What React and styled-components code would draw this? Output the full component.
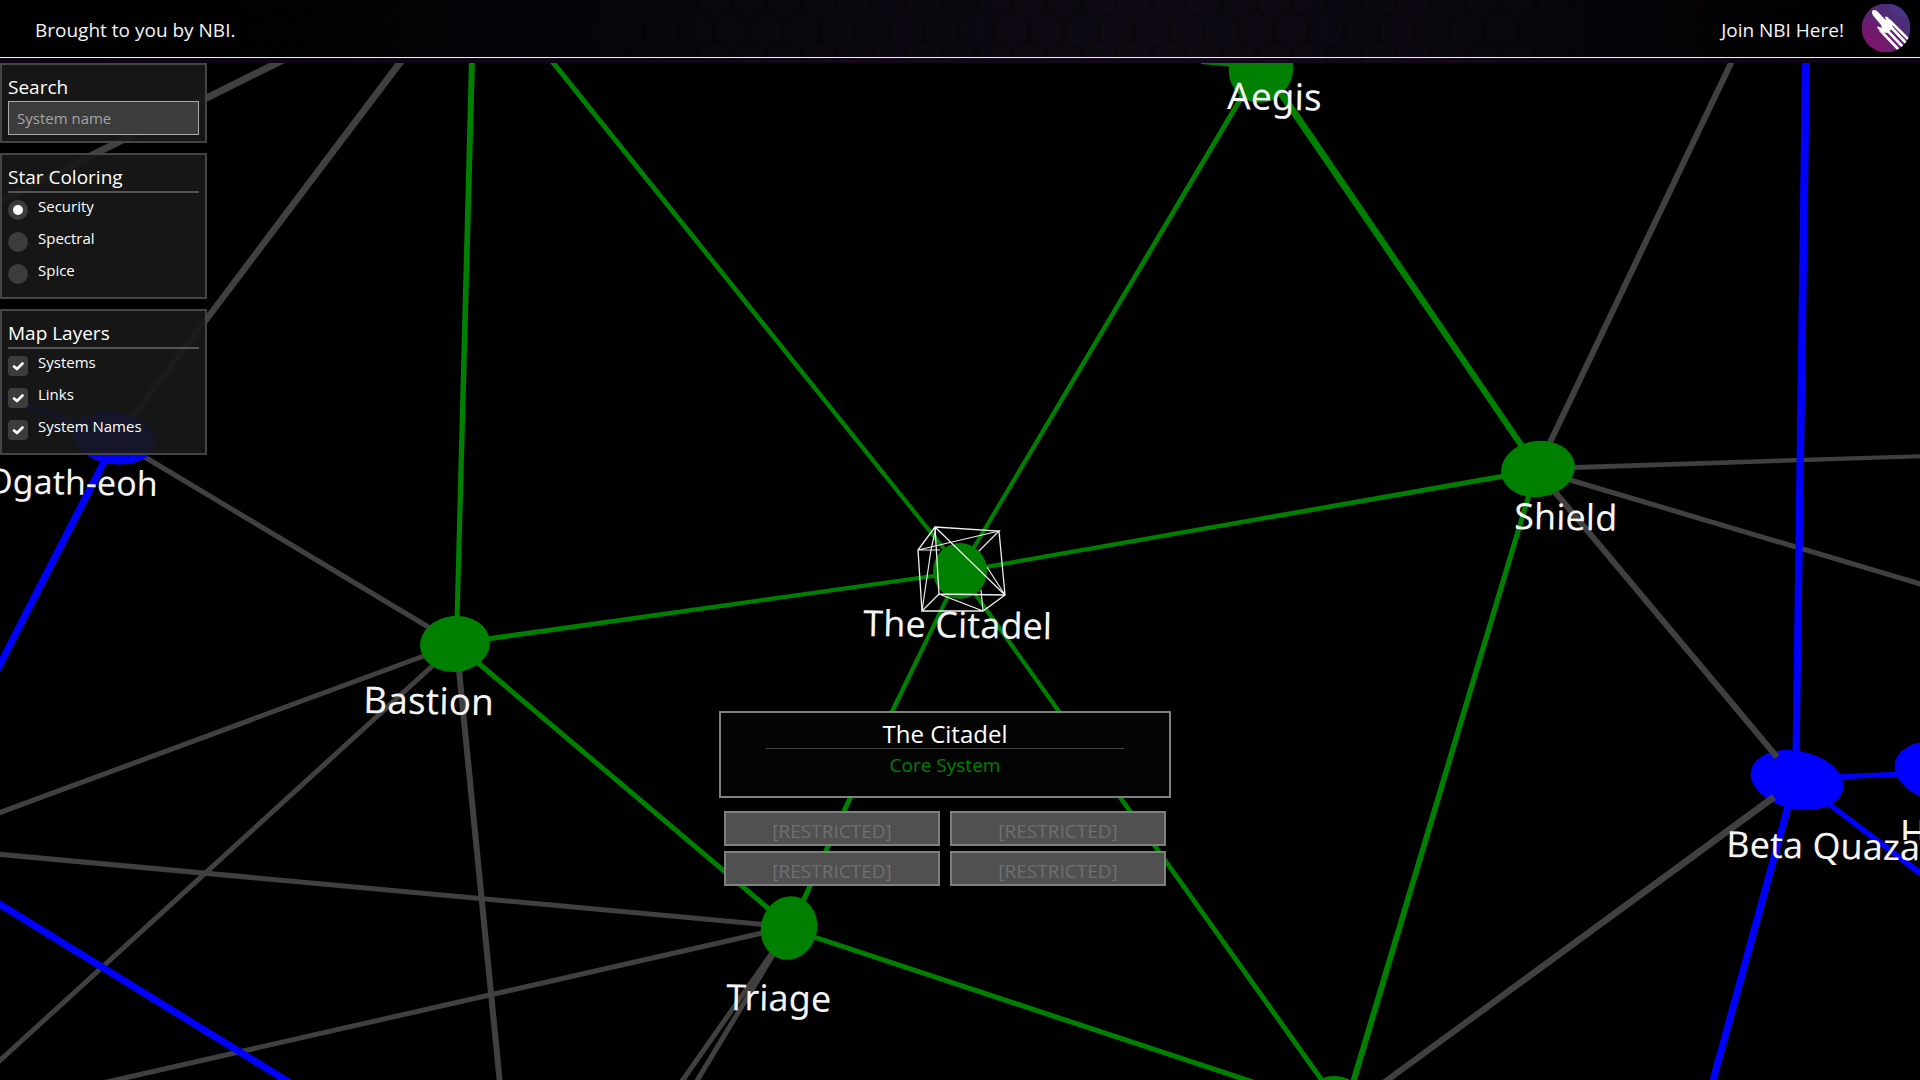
import React, { useState } from "react";
import styled, { createGlobalStyle } from "styled-components";

const GlobalStyle = createGlobalStyle`
  *, *::before, *::after { box-sizing: border-box; }
  body {
    margin: 0;
    background: #000;
    color: #fff;
    font-family: "Open Sans", "Noto Sans", sans-serif;
  }
`;

const Page = styled.div`
  display: grid;
  grid-template-rows: auto 1fr;
  height: 100vh;
  min-height: 600px;
`;

const Header = styled.header`
  display: grid;
  padding-bottom: 5px;
  background: #000;
`;

const HexBackdrop = styled.svg`
  position: absolute;
  top: 0;
  left: 0;
  width: 100%;
  height: 63px;
`;

const Bar = styled.div`
  position: relative;
  display: flex;
  align-items: center;
  justify-content: space-between;
  height: 58px;
  padding: 0 9px 0 35px;
  border-bottom: 1px solid #f4eefa;
`;

const Credit = styled.span`
  font-size: 19px;
  line-height: 28px;
  color: #f4f4f4;
  padding-top: 2px;
`;

const JoinLink = styled.a`
  display: flex;
  align-items: center;
  gap: 17px;
  color: inherit;
  text-decoration: none;
`;

const Logo = styled.svg`
  display: block;
  width: 50px;
  height: 50px;
`;

const Stage = styled.main`
  display: grid;
  grid-template: minmax(0, 1fr) / minmax(0, 1fr);
  overflow: hidden;
  & > * { grid-area: 1 / 1; }
`;

const StarMap = styled.svg`
  display: block;
  width: 100%;
  height: 100%;
`;

const MapLabel = styled.text`
  font-family: "Noto Sans", "Open Sans", sans-serif;
  font-size: ${(p) => p.$size || 36}px;
  fill: #f4f4f4;
`;

const Sidebar = styled.aside`
  display: flex;
  flex-direction: column;
  gap: 10px;
  align-self: start;
  justify-self: start;
  width: 207px;
`;

const Panel = styled.section`
  padding: 8px 6px 6px;
  border: 2px solid #444;
  background: rgba(24, 24, 24, 0.92);
`;

const PanelTitle = styled.h2`
  display: block;
  margin: 0;
  font-size: 19px;
  font-weight: 400;
  line-height: 28px;
`;

const SearchInput = styled.input`
  display: block;
  width: 100%;
  height: 34px;
  padding: 0 8px;
  border: 1px solid #aaa;
  border-radius: 0;
  outline: none;
  background: #3c3c3c;
  color: #fff;
  font: 15px "Open Sans", sans-serif;
  &::placeholder { color: #a4a4a4; }
`;

const Options = styled.div`
  display: grid;
  grid-auto-rows: 32px;
  padding-bottom: 2px;
  border-top: 2px solid #555;
`;

const Option = styled.label`
  display: flex;
  gap: 10px;
  font-size: 15px;
  line-height: 26px;
`;

const Tick = styled.span`
  display: grid;
  width: 20px;
  height: 20px;
  margin-top: 7px;
  & > * { grid-area: 1 / 1; }
  svg { width: 20px; height: 20px; pointer-events: none; visibility: hidden; }
  input:checked + svg { visibility: visible; }
`;

const TickInput = styled.input`
  appearance: none;
  width: 20px;
  height: 20px;
  margin: 0;
  border-radius: ${(p) => (p.type === "radio" ? "50%" : "4px")};
  background: #3c3c3c;
`;

const Details = styled.section`
  display: flex;
  flex-direction: column;
  align-items: center;
  gap: 13px;
  align-self: end;
  justify-self: center;
  width: 452px;
  margin: 0 30px 194px 0;
`;

const SystemCard = styled.div`
  display: flex;
  flex-direction: column;
  align-items: center;
  width: 100%;
  padding: 7px 0 17px;
  border: 2px solid #808080;
  background: #040404;
`;

const SystemName = styled.h1`
  width: 80%;
  margin: 0 0 2px;
  border-bottom: 1px solid #444;
  font-size: 24px;
  font-weight: 400;
  line-height: 28px;
  text-align: center;
`;

const SystemKind = styled.span`
  color: #008000;
  font-size: 19px;
  line-height: 28px;
`;

const Actions = styled.div`
  display: grid;
  grid-template-columns: 1fr 1fr;
  gap: 5px 10px;
  width: 442px;
`;

const ActionButton = styled.button`
  height: 35px;
  padding: 4px 0 0;
  border: 2px solid #808080;
  background: #505050;
  color: #6f6f6f;
  font: 19px "Open Sans", sans-serif;
`;

const GREEN = "#008000";
const BLUE = "#0000ff";
const GRAY = "#404040";

// [x1, y1, width1, x2, y2, width2]
const grayLinks = [
  [283, 60, 7, -4, 203, 7],
  [402, 60, 7, 132, 418, 6],
  [133, 450, 5, 440, 634, 5],
  [440, 650, 5, -4, 814, 5],
  [440, 659, 5, -4, 1064, 5],
  [458, 660, 6, 500, 1084, 6],
  [780, 926, 5, -4, 854, 5],
  [780, 929, 5, 98, 1084, 5],
  [774, 950, 5, 680, 1084, 5],
  [776, 950, 5, 695, 1084, 5],
  [1545, 453, 6, 1732, 61, 6],
  [1560, 468, 5, 1924, 456, 4],
  [1560, 477, 5, 1924, 585, 5],
];
const overlayGrayLinks = [
  [1555, 492, 6, 1777, 757, 6],
  [1774, 797, 7, 1382, 1084, 6],
];
const greenLinks = [
  [472, 60, 6, 457, 620, 5],
  [551, 60, 5, 945, 550, 4],
  [1250, 83, 5, 970, 554, 4],
  [1274, 83, 7, 1528, 455, 6],
  [980, 568, 4, 1510, 475, 5],
  [480, 640, 5, 940, 575, 4],
  [470, 656, 5, 776, 915, 5],
  [950, 592, 4, 844, 811, 5],
  [844, 811, 5, 800, 908, 5],
  [973, 591, 4, 1326, 1086, 5],
  [808, 935, 5, 1262, 1085, 5],
  [1531, 488, 5, 1352, 1086, 6],
];
const blueLinks = [
  [1806, 60, 8, 1796, 760, 7],
  [1792, 792, 7, 1712, 1084, 7],
  [1835, 777, 5, 1902, 774, 5],
  [1825, 801, 5, 1924, 876, 6],
  [108, 454, 7, -4, 672, 7],
  [80, 424, 4, -4, 395, 4],
  [-4, 902, 7, 292, 1084, 7],
];

// [cx, cy, rx, ry, tilt, colour]
const stars = [
  [1261, 69, 32, 34, 20, GREEN],
  [455, 644, 35, 28, -5, GREEN],
  [789, 928, 28, 32, 15, GREEN],
  [1538, 469, 37, 28, -8, GREEN],
  [960, 571, 27, 28, 0, GREEN],
  [1334, 1106, 32, 30, 0, GREEN],
  [1797, 780, 47, 29, 12, BLUE],
  [1941, 772, 47, 30, 12, BLUE],
  [114, 438, 42, 26, 8, BLUE],
];

// [text, x, baseline, tilt, size]
const labels = [
  ["Aegis", 1227, 109, 1, 37],
  ["The Citadel", 863, 636, 1, 36],
  ["Bastion", 363, 713, 1, 37],
  ["Triage", 726, 1010, 1, 36],
  ["Shield", 1514, 529, 1, 36],
  ["Beta Quazar", 1726, 857, 1, 36],
  ["Ogath-eoh", -14, 493, 1, 34],
];

function Link({ ends, fill }) {
  const [x1, y1, w1, x2, y2, w2] = ends;
  const len = Math.hypot(x2 - x1, y2 - y1);
  const nx = (y1 - y2) / len / 2;
  const ny = (x2 - x1) / len / 2;
  const points = [
    [x1 + nx * w1, y1 + ny * w1],
    [x2 + nx * w2, y2 + ny * w2],
    [x2 - nx * w2, y2 - ny * w2],
    [x1 - nx * w1, y1 - ny * w1],
  ];
  return <polygon points={points.map((p) => p.join(",")).join(" ")} fill={fill} />;
}

function Galaxy({ layers }) {
  return (
    <StarMap viewBox="0 63 1920 1017" preserveAspectRatio="xMidYMid slice" role="img" aria-label="Star map">
      <defs>
        <clipPath id="behindQuazar">
          <rect x="1890" y="800" width="40" height="40" />
        </clipPath>
      </defs>
      {layers.Links && (
        <g>
          {grayLinks.map((l, i) => <Link key={i} ends={l} fill={GRAY} />)}
          {greenLinks.map((l, i) => <Link key={i} ends={l} fill={GREEN} />)}
          {blueLinks.map((l, i) => <Link key={i} ends={l} fill={BLUE} />)}
          <polygon points="1201,61 1201,64 1234,67 1234,61" fill={GREEN} />
        </g>
      )}
      <g fill="none" stroke="#e8e8e8" strokeWidth="1.2">
        <path d="M918 550L999 531L978 552M918 550H940M922 611L931 550L936 527M987 567L1005 595M983 611L981 590" />
      </g>
      {layers.Systems && stars.map(([cx, cy, rx, ry, tilt, fill]) => (
        <ellipse key={cx} cx={cx} cy={cy} rx={rx} ry={ry} fill={fill} transform={`rotate(${tilt} ${cx} ${cy})`} />
      ))}
      {layers.Links && overlayGrayLinks.map((l, i) => <Link key={i} ends={l} fill={GRAY} />)}
      <g fill="none" stroke="#f0f0f0" strokeWidth="1.3">
        <path d="M935 527L999 531L1005 595L939 594ZM935 527L1005 595M935 527L918 550L922 611L939 594L983 611M922 611H983L1005 595" />
      </g>
      {layers["System Names"] && (
        <g>
          {labels.map(([text, x, y, tilt, size]) => (
            <MapLabel key={text} $size={size} x={x} y={y} transform={`rotate(${tilt} ${x} ${y})`}>{text}</MapLabel>
          ))}
          <g clipPath="url(#behindQuazar)">
            <MapLabel x="1900" y="846">H</MapLabel>
          </g>
        </g>
      )}
    </StarMap>
  );
}

function HeaderBackdrop() {
  return (
    <HexBackdrop aria-hidden="true">
      <defs>
        <pattern id="hexes" width="35" height="60" x="14" patternUnits="userSpaceOnUse">
          <rect width="35" height="60" fill="#0a070d" />
          <path
            fill="#0e0913"
            d="M17.500 12L33 21V39L17.500 48L2 39V21ZM0 -18L15.500 -9V9L0 18L-15.500 9V-9ZM35 -18L50.500 -9V9L35 18L19.500 9V-9ZM0 42L15.500 51V69L0 78L-15.500 69V51ZM35 42L50.500 51V69L35 78L19.500 69V51Z"
          />
        </pattern>
        <linearGradient id="fade">
          <stop offset="0" stopColor="#000" />
          <stop offset="0.15" stopColor="#000" stopOpacity="0.85" />
          <stop offset="0.45" stopColor="#000" stopOpacity="0.2" />
          <stop offset="0.6" stopColor="#000" stopOpacity="0" />
          <stop offset="0.75" stopColor="#000" stopOpacity="0.2" />
          <stop offset="0.9" stopColor="#000" stopOpacity="0.8" />
          <stop offset="1" stopColor="#000" />
        </linearGradient>
      </defs>
      <rect width="100%" height="63" fill="url(#hexes)" />
      <rect width="100%" height="63" fill="url(#fade)" />
      <rect y="58" width="100%" height="5" fill="#1a0a26" opacity="0.45" />
    </HexBackdrop>
  );
}

function NbiLogo() {
  return (
    <Logo viewBox="0 0 50 50" aria-hidden="true">
      <defs>
        <linearGradient id="disc" x1="0.1" y1="0.9" x2="0.8" y2="0.1">
          <stop offset="0" stopColor="#7c136c" />
          <stop offset="0.5" stopColor="#5c2472" />
          <stop offset="1" stopColor="#433279" />
        </linearGradient>
        <clipPath id="discClip"><circle cx="25" cy="24" r="24.500" /></clipPath>
      </defs>
      <g clipPath="url(#discClip)">
        <circle cx="25" cy="24" r="24.500" fill="url(#disc)" />
        <path d="M29 5C33 12 43 15 49 12V0H29Z" fill="#4a3584" />
        <path d="M5 20L12 16L32 36L22 48H10L5 38Z" fill="#861466" opacity="0.35" />
        <path
          fill="#fff"
          d="M11.500 6.500C13.500 5.500 15.500 6.500 17 8L25 16.500L24 12.500L27 13L29 17L31 20L32 24L26 29L20 28L16 23.500L17 22.500L21 24L20 21L12.500 12C11 10 10.500 8 11.500 6.500Z"
        />
        <path
          d="M28 16L47.500 35.500M27 20L45 39M24 24L42 43M19 26L38.500 46.500"
          fill="none"
          stroke="#fff"
          strokeWidth="2.600"
        />
      </g>
    </Logo>
  );
}

const colorings = ["Security", "Spectral", "Spice"];
const layerNames = ["Systems", "Links", "System Names"];
const actions = [1, 2, 3, 4];

export default function App() {
  const [coloring, setColoring] = useState("Security");
  const [layers, setLayers] = useState({ Systems: true, Links: true, "System Names": true });

  return (
    <Page>
      <GlobalStyle />
      <Header>
        <HeaderBackdrop />
        <Bar>
          <Credit>Brought to you by NBI.</Credit>
          <JoinLink href="#join">
            <Credit>Join NBI Here!</Credit>
            <NbiLogo />
          </JoinLink>
        </Bar>
      </Header>
      <Stage>
        <Galaxy layers={layers} />
        <Sidebar>
          <Panel>
            <PanelTitle as="label" htmlFor="search">Search</PanelTitle>
            <SearchInput id="search" type="text" placeholder="System name" />
          </Panel>
          <Panel>
            <PanelTitle>Star Coloring</PanelTitle>
            <Options>
              {colorings.map((name) => (
                <Option key={name}>
                  <Tick>
                    <TickInput
                      type="radio"
                      name="coloring"
                      checked={coloring === name}
                      onChange={() => setColoring(name)}
                    />
                    <svg viewBox="0 0 20 20"><circle cx="10" cy="10" r="5" fill="#fff" /></svg>
                  </Tick>
                  {name}
                </Option>
              ))}
            </Options>
          </Panel>
          <Panel>
            <PanelTitle>Map Layers</PanelTitle>
            <Options>
              {layerNames.map((name) => (
                <Option key={name}>
                  <Tick>
                    <TickInput
                      type="checkbox"
                      checked={layers[name]}
                      onChange={(e) => setLayers({ ...layers, [name]: e.target.checked })}
                    />
                    <svg viewBox="0 0 20 20">
                      <path d="M6 10.500L9 13L14.500 7.500" fill="none" stroke="#fff" strokeWidth="2.600" strokeLinecap="round" />
                    </svg>
                  </Tick>
                  {name}
                </Option>
              ))}
            </Options>
          </Panel>
        </Sidebar>
        <Details>
          <SystemCard>
            <SystemName>The Citadel</SystemName>
            <SystemKind>Core System</SystemKind>
          </SystemCard>
          <Actions>
            {actions.map((n) => (
              <ActionButton key={n} type="button" disabled>[RESTRICTED]</ActionButton>
            ))}
          </Actions>
        </Details>
      </Stage>
    </Page>
  );
}
